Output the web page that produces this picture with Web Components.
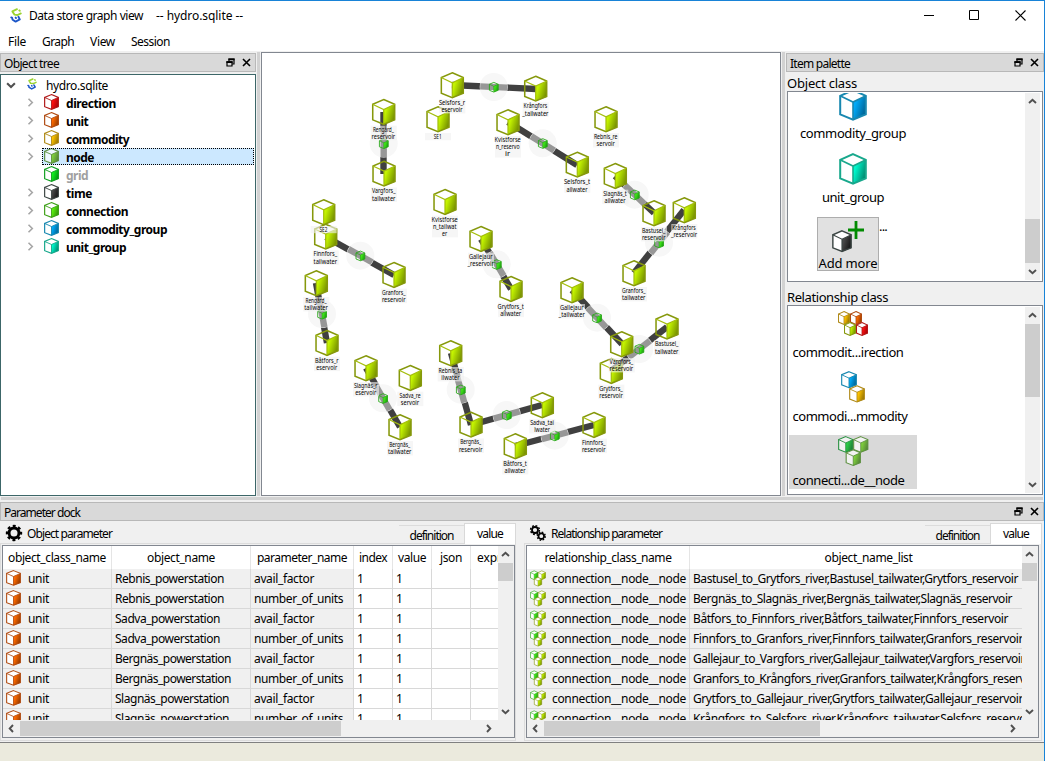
<!DOCTYPE html>
<html lang="en"><head><meta charset="utf-8"><title>Data store graph view</title>
<style>html,body{margin:0;height:761px;overflow:hidden;background:#f0f0f0}body{font:12px/1 "Noto Sans","Open Sans",sans-serif;color:#000}</style></head>
<body><app-window></app-window>
<script>
const define=(name,html,setup)=>customElements.define(name,class extends HTMLElement{
  connectedCallback(){
    if(this.shadowRoot)return;
    const r=this.attachShadow({mode:'open'});
    const t=document.createElement('template');
    t.innerHTML=typeof html==='function'?html(this):html;
    r.append(t.content.cloneNode(true));
    if(setup)setup(this,r);
  }
});
let uid=0;
const C={red:['#ff1010','#9a0008','#b01818'],orange:['#ff6a00','#8a3600','#b04a10'],yellow:['#ffc400','#8a6a00','#b08a18'],
 node:['#7fd03c','#4f7a38','#5d9040'],grid:['#10f020','#008a10','#10a020'],black:['#484848','#101010','#3c4644'],
 conn:['#5cf010','#2e8a08','#3ea018'],blue:['#00aaf8','#005a88','#1888b0'],teal:['#00f8cc','#007a62','#18a88c'],
 lime:['#c4f400','#6c8400','#86980c'],green:['#2cd048','#1c7030','#289040'],bright:['#44f018','#189010','#28a818']};
// One isometric cube on a 28 by 32 grid
const cube=(c,x,y,w,h,o={})=>{const[a,b,s]=C[c],id='g'+(++uid);
 return `<g transform="translate(${x} ${y}) scale(${w/28} ${h/32})"><defs><linearGradient id="${id}" x1="0" y1=".2" x2="1" y2=".75"><stop offset=".2" stop-color="${a}"/><stop offset="1" stop-color="${b}"/></linearGradient></defs>
 <path d="M14 1L27 6.8V25.5L14 31L1 25.5V6.8Z" fill="${o.hollow?'none':'#fff'}" fill-opacity="${o.soft?.65:1}"/><path d="M14 13L27 6.8V25.5L14 31Z" fill="url(#${id})"/>
 <path d="M14 1.2L26.8 6.8V25.3L14 30.6L1.2 25.3V6.8Z" fill="none" stroke="${s}" stroke-width="${o.sw||2}"/><path d="M1 6.8L14 13L27 6.8M14 13V30" fill="none" stroke="${o.in||s}" stroke-width="${(o.sw||2)*.8}"/></g>`};
const pics={
 logo:['0 0 12 15','<g fill="none" stroke-width="1.9" stroke-linejoin="round" stroke-linecap="round"><path d="M7 1.2L2.4 3.4L4.4 6.6L7.6 7L10.8 5.4M9.3 2.4L9.8 2.7" stroke="#9bd431"/><path d="M1.2 9.4L2 9.6L2.6 11.8L5.6 13.6L9.8 11.4L8.4 8.8M5.6 9.6L6 10" stroke="#1c56c8"/></g>'],
 gear:['-8 -8 16 16','<g fill="none" stroke="#000"><circle r="5" stroke-width="3"/><circle r="7" stroke-width="2.4" stroke-dasharray="2.9 2.6" stroke-dashoffset="1.45"/></g>'],
 gears:['0 0 16 16','<g fill="none" stroke="#000"><g transform="translate(5 5)"><circle r="3" stroke-width="1.8"/><circle r="4.4" stroke-width="1.5" stroke-dasharray="1.8 1.65"/></g><g transform="translate(11.3 11.2)"><circle r="2.8" stroke-width="1.8"/><circle r="4" stroke-width="1.4" stroke-dasharray="1.6 1.54"/></g></g>'],
 float:['0 0 9 9','<path d="M3 3.5V1H8V6H6M1 3.8H6V8H1Z" fill="none" stroke="#000" stroke-width="1.2"/><path d="M2.4 1.3H8.6M.4 4.2H6.6" stroke="#000" stroke-width="1.7"/>'],
 close:['0 0 9 9','<path d="M1 1L8 8M8 1L1 8" stroke="#000" stroke-width="1.6"/>'],
 min:['0 0 11 11','<path d="M0 5.5H10" stroke="#000"/>'],
 max:['0 0 11 11','<path d="M.5 .5H9.5V9.5H.5Z" fill="none" stroke="#000"/>'],
 x:['0 0 11 11','<path d="M.5 .5L10.5 10.5M10.5 .5L.5 10.5" stroke="#000" stroke-width="1.1"/>'],
 up:['0 0 9 9','<path d="M1 6L4.5 2.7L8 6" fill="none" stroke="#505050" stroke-width="1.9"/>'],
 down:['0 0 9 9','<path d="M1 3L4.5 6.3L8 3" fill="none" stroke="#505050" stroke-width="1.9"/>'],
 left:['0 0 9 9','<path d="M6 1L2.7 4.5L6 8" fill="none" stroke="#505050" stroke-width="1.9"/>'],
 right:['0 0 9 9','<path d="M3 1L6.3 4.5L3 8" fill="none" stroke="#505050" stroke-width="1.9"/>'],
 twist:['0 0 9 9','<path d="M2.5 .8L6.3 4.5L2.5 8.2" fill="none" stroke="#a6a6a6" stroke-width="1.6"/>'],
 cubes3:['0 0 16 17',()=>cube('bright',.2,.5,8,9.5,{sw:2.2})+cube('lime',7.8,.5,8,9.5,{sw:2.2})+cube('lime',4,7,8,9.5,{sw:2.2})],
 rel4:['0 0 30 32',()=>cube('yellow',0,4,12,14,{sw:2.4})+cube('orange',12,4,12,14,{sw:2.4})+cube('lime',6,15,12,14,{sw:2.4})+cube('red',18,15,12,14,{sw:2.4})],
 rel2:['0 0 30 32',()=>cube('blue',3,0,16,17.5)+cube('yellow',11,14.2,16,17.5)],
 rel3:['0 0 30 32',()=>cube('green',0,1,15.5,17,{soft:1})+cube('node',15,1,15.5,17,{soft:1})+cube('node',7.5,14.2,15.5,17,{soft:1})],
 add:['0 0 32 32',()=>cube('black',0,9,20,22.5)+'<path d="M24 0V18M16 9H32" stroke="#008a00" stroke-width="2.8"/>']
};
define('ui-icon',el=>{const n=el.getAttribute('name'),w=el.getAttribute('w'),h=el.getAttribute('h')||w;
 let p=pics[n];if(!p)p=['0 0 28 32',()=>cube(n,0,0,28,32,{sw:el.getAttribute('sw')||2,soft:el.hasAttribute('soft')})];
 return `<style>:host{display:block;flex:none;width:${w}px;height:${h}px}svg{display:block;width:100%;height:100%;overflow:visible}</style><svg viewBox="${p[0]}" preserveAspectRatio="none">${typeof p[1]==='function'?p[1]():p[1]}</svg>`});
// Single-line text tracked out or in to a given width
define('ui-text','<style>:host{display:inline-block;flex:none;white-space:pre}span{display:inline-block}</style><span><slot></slot></span>',(el,r)=>{
 const s=r.querySelector('span'),w=+el.getAttribute('w');
 if(w)s.style.letterSpacing=((w-s.getBoundingClientRect().width)/el.textContent.length)+'px';
});
define('dock-title',el=>`<style>:host{display:flex;box-sizing:border-box;height:19px;border:1px solid #b8b8b8;background:#d9d9d9;align-items:center;padding:0 4px 0 3px;line-height:19px;flex:none}
 ui-text{margin-top:2px}.s{flex:1}ui-icon{margin-left:7px}</style><ui-text w="${el.getAttribute('w')}">${el.getAttribute('label')}</ui-text><span class="s"></span><ui-icon name="float" w="9"></ui-icon><ui-icon name="close" w="9"></ui-icon>`);
define('scroll-bar',el=>{const v=!el.hasAttribute('horizontal'),a=el.getAttribute('before'),b=el.getAttribute('size');
 return `<style>:host{display:flex;flex-direction:${v?'column':'row'};background:#f0f0f0;align-items:center;flex:none;${v?'width:15px':'height:15px'}}
 .a{display:flex;align-items:center;justify-content:center;flex:none;width:${v?15:17}px;height:${v?17:15}px}.g{flex:none;${v?'height':'width'}:${a}px}.t{flex:none;background:#cdcdcd;${v?`width:15px;height:${b}px`:`height:15px;width:${b}px`}}.s{flex:1}</style>
 <span class="a"><ui-icon name="${v?'up':'left'}" w="9"></ui-icon></span><span class="g"></span><span class="t"></span><span class="s"></span><span class="a"><ui-icon name="${v?'down':'right'}" w="9"></ui-icon></span>`});
const tree=[['direction','red',50,1],['unit','orange',22,1],['commodity','yellow',63,1],['node','node',28,1],['grid','grid',22,0],['time','black',26,1],['connection','conn',62,1],['commodity_group','blue',101,1],['unit_group','teal',60,1]];
define('object-tree',`<style>:host{display:block;box-sizing:border-box;border:1px solid #3c6668;background:#fff;padding-top:1px;flex:1;min-height:0}
 .r{display:flex;height:18px;line-height:19px;align-items:flex-start;font-weight:700;padding-left:25px}.r>ui-icon{margin-top:4px}
 .n{display:flex;flex:1;margin:0 1px 0 7px;padding-left:2px;height:17px;box-sizing:border-box}.n ui-text{margin-left:7px}
 .sel{background:#cce8ff;outline:1px dotted #000;outline-offset:-1px}
 .root{font-weight:400;padding-left:5px}.root .l{margin:2px 9px 0 11px}.off{color:#a0a0a0}.gap{width:9px}</style>
 <div class="r root"><ui-icon name="down" w="10"></ui-icon><ui-icon class="l" name="logo" w="10" h="12"></ui-icon><ui-text w="62">hydro.sqlite</ui-text></div>
 ${tree.map(([t,c,w,a])=>`<div class="r ${t==='grid'?'off':''}">${a?'<ui-icon name="twist" w="9"></ui-icon>':'<span class="gap"></span>'}<div class="n ${t==='node'?'sel':''}"><ui-icon name="${c}" w="15" h="16" sw="2.2" ${t==='node'?'soft':''}></ui-icon><ui-text w="${w}">${t}</ui-text></div></div>`).join('')}`);
const nodes=[['SE1',438,119.3],['Selsfors_r|eservoir',452.3,85.3],['Krångfors|_tailwater',535.7,88.7],['Rengård_|reservoir',383.7,112],['Vargfors_|tailwater',384,173.7],['Kvistforse|n_reservo|ir',508,122.3],['Rebnis_re|servoir',606,119.3],['Selsfors_t|ailwater',577.3,164.7],['Slagnäs_t|ailwater',615.3,176],['Krångfors|_reservoir',684.3,210.3],['Bastusel_|reservoir',654,213.3],['Finnfors_|tailwater',325.7,236.7],['SE2',323.7,212.3],['Kvistforse|n_tailwat|er',445,202],['Gallejaur|_reservoir',481,239],['Granfors_|reservoir',394,275],['Rengård_|tailwater',316.3,283.3],['Båtfors_r|eservoir',327,343],['Slagnäs_r|eservoir',366,368.3],['Sadva_re|servoir',410.3,378],['Bergnäs_|tailwater',400,427.3],['Rebnis_ta|ilwater',450.7,353.3],['Bergnäs_|reservoir',471,424.7],['Grytfors_t|ailwater',511,289],['Gallejaur|_tailwater',572,290.3],['Granfors_|tailwater',634,273.3],['Bastusel_|tailwater',667,326.7],['Grytfors_|reservoir',611.3,371],['Vargfors_|reservoir',621.7,344.3],['Sadva_tai|lwater',542.3,405.3],['Finnfors_|reservoir',594,425],['Båtfors_t|ailwater',515.3,446.3]];
const links=[[452,85,536,89,493.7,87],[383.5,112,383.5,174,383.7,143.5],[508,122,577,165,542.7,143.3],[615,176,654,213,634.7,194.7],[684,210,634,273,659,242.7],[326,237,394,275,360.3,255.7],[481,239,511,289,496.7,264.3],[316,283,327,343,322,314],[366,368,400,427,383,398.3],[451,353,471,425,460.7,389.7],[471,425,542,405,506.7,415],[515,446,594,425,554.7,435.7],[572,290,622,344,597,317.7],[667,327,611,371,639.3,349]];
define('graph-canvas',()=>`<style>:host{display:block;box-sizing:border-box;border:1px solid #828790;background:#fff;overflow:hidden}svg{display:block;font:6.7px "Noto Sans",sans-serif}</style>
 <svg width="518" height="442" viewBox="262 53 518 442">
 ${links.map(([a,b,c,d])=>`<path d="M${a} ${b}L${c} ${d}" stroke="#404040" stroke-width="6.4"/>`).join('')}
 ${links.map(([a,b,c,d,x,y])=>{const l=Math.hypot(c-a,d-b),u=(c-a)/l*13.5,v=(d-b)/l*13.5;return `<circle cx="${x}" cy="${y}" r="14" fill="#f7f7f7"/><path d="M${x-u} ${y-v}L${x+u} ${y+v}" stroke="#979797" stroke-width="6.4"/>${cube('bright',x-4.7,y-5,9.6,10.5,{hollow:1,sw:2.6})}`}).join('')}
 ${nodes.map(([t,x,y])=>{const L=t.split('|');return cube('lime',x-12,y-13.5,24,27,{hollow:1,sw:1.8,in:'#a4be0c'})+`<rect x="${x-13}" y="${y+13.7}" width="26" height="${L.length*7.2}" fill="#f0f0f0" fill-opacity=".62"/>`+L.map((s,i)=>`<text x="${x-.3}" y="${y+19.7+i*7.2}" text-anchor="middle" textLength="${(s.length*2.62).toFixed(1)}" lengthAdjust="spacingAndGlyphs">${s}</text>`).join('')}).join('')}
 </svg>`);
define('palette-item',el=>`<style>:host{display:flex;flex-direction:column;width:128px;height:64px;flex:none;font-size:13px;line-height:18px}.b{display:flex;flex-direction:column;align-items:center;height:54px}ui-icon{margin-bottom:${el.getAttribute('gap')||3}px}
 :host([left]) ui-text{align-self:flex-start;margin-left:3.5px}:host([selected]) .b{background:#d9d9d9}</style><div class="b"><ui-icon name="${el.getAttribute('icon')}" w="${el.getAttribute('iw')}" h="32"></ui-icon><ui-text w="${el.getAttribute('w')}">${el.getAttribute('label')}</ui-text></div>`);
define('palette-list',`<style>:host{display:flex;box-sizing:border-box;border:1px solid #828790;background:#fff;padding:1px 2px 1px 1px;flex:none}.v{flex:1;min-width:0;overflow:hidden}</style><div class="v"><slot></slot></div><slot name="bar"></slot>`);
define('item-palette',`<style>:host{display:flex;flex-direction:column}.h{font-size:13px;height:19px;line-height:23px;padding-left:1px;flex:none}.h2{height:23px;box-sizing:border-box;padding-top:7px;line-height:16px}
 .one{height:191px;margin:0 1px}.two{height:190px;margin:0 1px}.c{display:flex;flex-direction:column}.one .c{margin-top:-4px}
 .more{display:flex;width:98px;padding-left:28px;line-height:18px;font-size:13px}.btn{box-sizing:border-box;flex:none;width:62px;height:54px;background:#e1e1e1;border:1px solid #adadad;display:flex;flex-direction:column;align-items:center}.btn ui-icon{margin:3px 0 1px}</style>
 <dock-title w="60" label="Item palette"></dock-title><div class="h"><ui-text w="70">Object class</ui-text></div>
 <palette-list class="one"><div class="c"><palette-item icon="blue" iw="28" w="106" label="commodity_group"></palette-item><palette-item icon="teal" iw="28" w="62" label="unit_group"></palette-item>
 <div class="more"><div class="btn"><ui-icon name="add" w="32" h="32"></ui-icon><ui-text w="59">Add more</ui-text></div><ui-text w="8">...</ui-text></div></div><scroll-bar slot="bar" before="109" size="44"></scroll-bar></palette-list>
 <div class="h h2"><ui-text w="101">Relationship class</ui-text></div>
 <palette-list class="two"><div class="c"><palette-item left gap="4" icon="rel4" iw="30" w="111" label="commodit...irection"></palette-item><palette-item left gap="4" icon="rel2" iw="30" w="115" label="commodi...mmodity"></palette-item><palette-item left selected gap="4" icon="rel3" iw="30" w="112" label="connecti...de__node"></palette-item></div><scroll-bar slot="bar" before="0" size="73"></scroll-bar></palette-list>`);
define('tab-page',el=>`<style>:host{display:flex;flex-direction:column;width:${el.getAttribute('width')}px;flex:none}.t{display:flex;height:22px;flex:none;align-items:flex-end;line-height:20px}
 .t>ui-icon{margin:0 5px 2px 6px}.t>ui-text{line-height:18px}.s{flex:1}.d{box-sizing:border-box;width:65px;height:18px;border-top:1px solid #dcdcdc;text-align:center;line-height:19px}
 .v{box-sizing:border-box;width:52px;height:21px;margin-bottom:-1px;border:1px solid #d9d9d9;border-bottom:0;background:#fff;text-align:center;z-index:1}
 .f{box-sizing:border-box;border:1px solid #dcdcdc;height:198px;padding:1px}</style>
 <div class="t"><ui-icon name="${el.getAttribute('icon')}" w="16"></ui-icon><ui-text w="${el.getAttribute('w')}">${el.getAttribute('label')}</ui-text><span class="s"></span><div class="d"><ui-text w="44">definition</ui-text></div><div class="v"><ui-text w="26">value</ui-text></div></div><div class="f"><slot></slot></div>`);
const grid=(cols,heads,rows,thumb,gap)=>`<style>:host{display:flex;flex-direction:column;box-sizing:border-box;width:513px;height:193px;border:1px solid #828790;background:#f0f0f0}
 .m{display:flex;height:174px;overflow:hidden}.g{flex:1;min-width:0;overflow:hidden;background:#fff}.g>div{display:grid;grid-template-columns:${cols};width:max-content}
 .g>div>div{box-sizing:border-box;height:20px;line-height:19px;border-right:1px solid #d8d8d8;border-bottom:1px solid #d8d8d8;padding-left:3px;display:flex;overflow:hidden}
 .g>div>.k{background:#f0f0f0}.g>div>.h{height:23px;line-height:23px;border-bottom:0;justify-content:center;padding:0;border-color:#e5e5e5}.g>div>.l{justify-content:flex-start;padding-left:6px}
 .g ui-icon{margin:1px ${gap}px 0 0}scroll-bar[horizontal]{margin-top:1px;width:494px}.m scroll-bar{margin:0 1px 0 0}</style>
 <div class="m"><div class="g"><div>${heads}${rows}</div></div><scroll-bar before="0" size="18"></scroll-bar></div><scroll-bar horizontal before="0" size="${thumb}"></scroll-bar>`;
const T=(s,w)=>`<ui-text w="${w}">${s}</ui-text>`;
const ob=[['Rebnis',109],['Sadva',105],['Bergnäs',116],['Slagnäs',114]];
define('object-table',()=>grid('109px 139px 103px 39px 39px 39px 80px',
 [['object_class_name',98],['object_name',68],['parameter_name',90],['index',28],['value',28],['json',22]].map(a=>`<div class="h">${T(...a)}</div>`).join('')+`<div class="h l">${T('expression',60)}</div>`,
 ob.flatMap(([n,w])=>[['avail_factor',60],['number_of_units',89]].map(p=>`<div class="k"><ui-icon name="orange" w="15" h="16"></ui-icon>${T('unit',21)}</div><div class="k">${T(n+'_powerstation',w)}</div><div class="k">${T(...p)}</div><div>1</div><div>1</div><div></div><div></div>`)).join(''),321,7));
const rl=[['Bastusel','Grytfors','Bastusel','Grytfors',325],['Bergnäs','Slagnäs','Bergnäs','Slagnäs',319],['Båtfors','Finnfors','Båtfors','Finnfors',315],['Finnfors','Granfors','Finnfors','Granfors',330],['Gallejaur','Vargfors','Gallejaur','Vargfors',332],['Granfors','Krångfors','Granfors','Krångfors',346],['Grytfors','Gallejaur','Grytfors','Gallejaur',330],['Krångfors','Selsfors','Krångfors','Selsfors',340]];
define('relationship-table',()=>grid('163px 358px',`<div class="h">${T('relationship_class_name',127)}</div><div class="h">${T('object_name_list',88)}</div>`,
 rl.map(([a,b,c,d,w])=>`<div class="k"><ui-icon name="cubes3" w="16" h="17"></ui-icon>${T('connection__node__node',134)}</div><div class="k">${T(`${a}_to_${b}_river,${c}_tailwater,${d}_reservoir`,w)}</div>`).join(''),276,6));
define('app-window',`<style>:host{display:flex;flex-direction:column;box-sizing:border-box;width:1045px;height:761px;border-top:1px solid #1883d7;border-right:1px solid #1883d7;background:#f0f0f0}
 .title{display:flex;align-items:flex-start;height:28px;background:#fff;line-height:30px;flex:none;padding-left:10px}.title>ui-icon{margin-top:7px}.title .n{margin-left:7px}.title .f{margin-left:13px}.s{flex:1}
 .title .w{display:flex;margin:9px 18px 0 0;gap:35px}.w ui-icon:first-child{margin-right:-1px}.menu{display:flex;height:22px;background:#fff;line-height:26px;flex:none;padding-left:8px;gap:16px}
 .top{display:grid;grid-template-columns:256px 5px 520px 5px 258px;height:444px;margin-top:1px;flex:none}.l{display:flex;flex-direction:column;padding-top:1px}.l object-tree{margin-top:2px}
 .r{padding-top:1px}.sp{background:#d2d2d2;width:3px;margin-left:1px}.hs{height:3px;background:#d2d2d2;margin:1px 1px 2px;flex:none}
 .tabs{display:flex;justify-content:space-between;height:220px;padding-right:2px;flex:none}.st{flex:1;border-top:1px solid #808080;background:#ebeadd;margin-top:1px}</style>
 <div class="title"><ui-icon name="logo" w="12" h="15"></ui-icon><ui-text class="n" w="114">Data store graph view</ui-text><ui-text class="f" w="87">-- hydro.sqlite --</ui-text><span class="s"></span><div class="w"><ui-icon name="min" w="11"></ui-icon><ui-icon name="max" w="11"></ui-icon><ui-icon name="x" w="11"></ui-icon></div></div>
 <div class="menu"><ui-text w="18">File</ui-text><ui-text w="32">Graph</ui-text><ui-text w="25">View</ui-text><ui-text w="39">Session</ui-text></div>
 <div class="top"><div class="l"><dock-title w="55" label="Object tree"></dock-title><object-tree></object-tree></div><div class="sp"></div><graph-canvas></graph-canvas><div class="sp"></div><item-palette class="r"></item-palette></div>
 <div class="hs"></div><dock-title w="76" label="Parameter dock"></dock-title>
 <div class="tabs"><tab-page width="516" icon="gear" label="Object parameter" w="85"><object-table></object-table></tab-page><tab-page width="518" icon="gears" label="Relationship parameter" w="111"><relationship-table></relationship-table></tab-page></div><div class="st"></div>`);
</script></body></html>
